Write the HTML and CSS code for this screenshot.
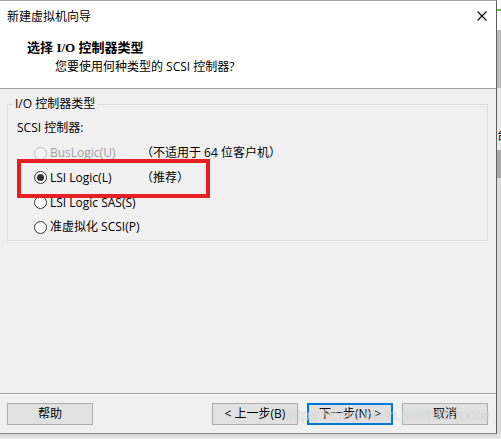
FILE: index.html
```html
<!DOCTYPE html>
<html lang="zh-CN">
<head>
<meta charset="utf-8">
<title>新建虚拟机向导</title>
<link rel="stylesheet" href="styles.css">
</head>
<body>
<div class="screen">
  <div class="window">
    <div class="titlebar">
      <span class="title">新建虚拟机向导</span>
      <svg class="close" width="10" height="10" viewBox="0 0 10 10"><path d="M0.5 0.5 L9.5 9.5 M9.5 0.5 L0.5 9.5" stroke="#000" stroke-width="1.1" fill="none"/></svg>
    </div>
    <div class="header">
      <div class="h-title"><span class="cjk">选择</span> <span class="latin">I/O</span> <span class="cjk">控制器类型</span></div>
      <div class="h-sub">您要使用何种类型的 SCSI 控制器?</div>
    </div>
    <div class="content">
      <fieldset class="group">
        <legend>I/O 控制器类型</legend>
        <div class="label">SCSI 控制器:</div>
        <div class="opt disabled"><span class="radio"></span><span class="name">BusLogic(U)</span><span class="note">（不适用于 64 位客户机）</span></div>
        <div class="opt"><span class="radio checked"></span><span class="name">LSI Logic(L)</span><span class="note">（推荐）</span></div>
        <div class="opt"><span class="radio"></span><span class="name">LSI Logic SAS(S)</span></div>
        <div class="opt"><span class="radio"></span><span class="name">准虚拟化 SCSI(P)</span></div>
      </fieldset>
    </div>
    <div class="footer">
      <button class="btn">帮助</button>
      <span class="spacer"></span>
      <button class="btn">&lt; 上一步(B)</button>
      <button class="btn default">下一步(N) &gt;</button>
      <button class="btn">取消</button>
    </div>
    <div class="annot"></div>
    <div class="watermark">https://blog.csdn.net/hlingcore</div>
  </div>
  <div class="sliver"><span class="sliver-char">台</span></div>
</div>
</body>
</html>
```

FILE: styles.css
```css
* { box-sizing: border-box; }
html, body { margin: 0; padding: 0; }
body {
  width: 501px;
  height: 439px;
  overflow: hidden;
  background: #e4e4e4;
  font-family: "Open Sans", "Noto Sans CJK SC", sans-serif;
  font-size: 12px;
  line-height: 16px;
  color: #000;
}
.screen {
  display: flex;
  align-items: flex-start;
  height: 439px;
  background: linear-gradient(to bottom, #d2d2d2, #ececec) 0 434px / 497px 5px no-repeat;
}
.window {
  position: relative;
  width: 497px;
  height: 434px;
  display: flex;
  flex-direction: column;
  border-top: 1px solid #a3a3a3;
  border-right: 1px solid #5f5f5f;
  border-bottom: 1px solid #8a8a8a;
  background: #f0f0f0;
  flex: none;
}
.titlebar {
  height: 30px;
  background: #fff;
  display: flex;
  align-items: center;
  justify-content: space-between;
  padding: 0 9px 0 7px;
}
.title { line-height: 30px; padding-top: 1px; }
.close { display: block; }
.header {
  height: 58px;
  background: #fff;
  border-bottom: 1px solid #a0a0a0;
  padding-top: 8px;
}
.h-title {
  padding-left: 27px;
  font-weight: bold;
  font-size: 13px;
  line-height: 16px;
}
.h-title .cjk { font-family: "Noto Sans CJK SC", sans-serif; }
.h-title .latin { font-family: "Liberation Serif", serif; }
.h-sub {
  padding-left: 55px;
  margin-top: 3px;
  line-height: 16px;
}
.content {
  height: 304px;
  padding: 7px 8px 0 7px;
}
.group {
  margin: 0;
  padding: 0 0 0 5px;
  border: 1px solid #dcdcdc;
  min-width: 0;
}
.group legend {
  padding: 0 2px;
  line-height: 16px;
}
.label {
  margin: 8px 0 0 4px;
  line-height: 16px;
}
.opt {
  display: flex;
  align-items: center;
  height: 24.67px;
  margin-left: 21px;
}
.label + .opt { margin-top: 5px; }
.radio {
  width: 13px;
  height: 13px;
  border: 1px solid #333;
  border-radius: 50%;
  background: #fff;
  margin-right: 3px;
  position: relative;
  flex: none;
}
.radio.checked::after {
  content: "";
  position: absolute;
  left: 2px;
  top: 2px;
  width: 7px;
  height: 7px;
  border-radius: 50%;
  background: #333;
}
.name { width: 91px; flex: none; white-space: nowrap; }
.note { white-space: nowrap; }
.disabled .radio { border-color: #c0c0c0; background: #f4f4f4; }
.disabled .name { color: #a0a0a0; }
.footer {
  flex: 1;
  display: flex;
  align-items: flex-start;
  border-top: 1px solid #a0a0a0;
  box-shadow: inset 0 1px 0 #fff;
  padding: 9px 8px 0 7px;
}
.spacer { flex: 1; }
.btn {
  width: 86px;
  height: 22px;
  margin: 0;
  padding: 0;
  background: #e1e1e1;
  border: 1px solid #adadad;
  font-family: inherit;
  font-size: 12px;
  line-height: 18px;
  color: #000;
  text-align: center;
}
.btn + .btn { margin-left: 9px; }
.btn.default { border: 2px solid #0078d7; }
.annot {
  position: absolute;
  left: 17px;
  top: 158px;
  width: 193px;
  height: 39px;
  border: 4px solid #e81e25;
}
.watermark {
  position: absolute;
  left: 284px;
  top: 404px;
  font-family: "Liberation Sans", sans-serif;
  font-size: 15.5px;
  line-height: 20px;
  color: rgba(255, 255, 255, 0.5);
  text-shadow: 0 0 1px rgba(140, 140, 140, 0.45);
  white-space: nowrap;
}
.sliver {
  position: relative;
  width: 4px;
  height: 439px;
  flex: none;
  overflow: hidden;
  background: linear-gradient(to bottom, #ffffff 0, #ffffff 9px, #6db35a 9px, #6db35a 11px, #ffffff 11px, #ffffff 30px, #bdbdbd 30px, #bdbdbd 88px, #eaeaea 88px, #eaeaea 150px, #a9a9a9 150px, #a9a9a9 178px, #dadada 178px, #dadada 434px, #e4e4e4 434px);
}
.sliver-char {
  position: absolute;
  left: 0;
  top: 127px;
  font-family: "Noto Sans CJK SC", sans-serif;
  font-size: 12px;
  line-height: 16px;
}
```
